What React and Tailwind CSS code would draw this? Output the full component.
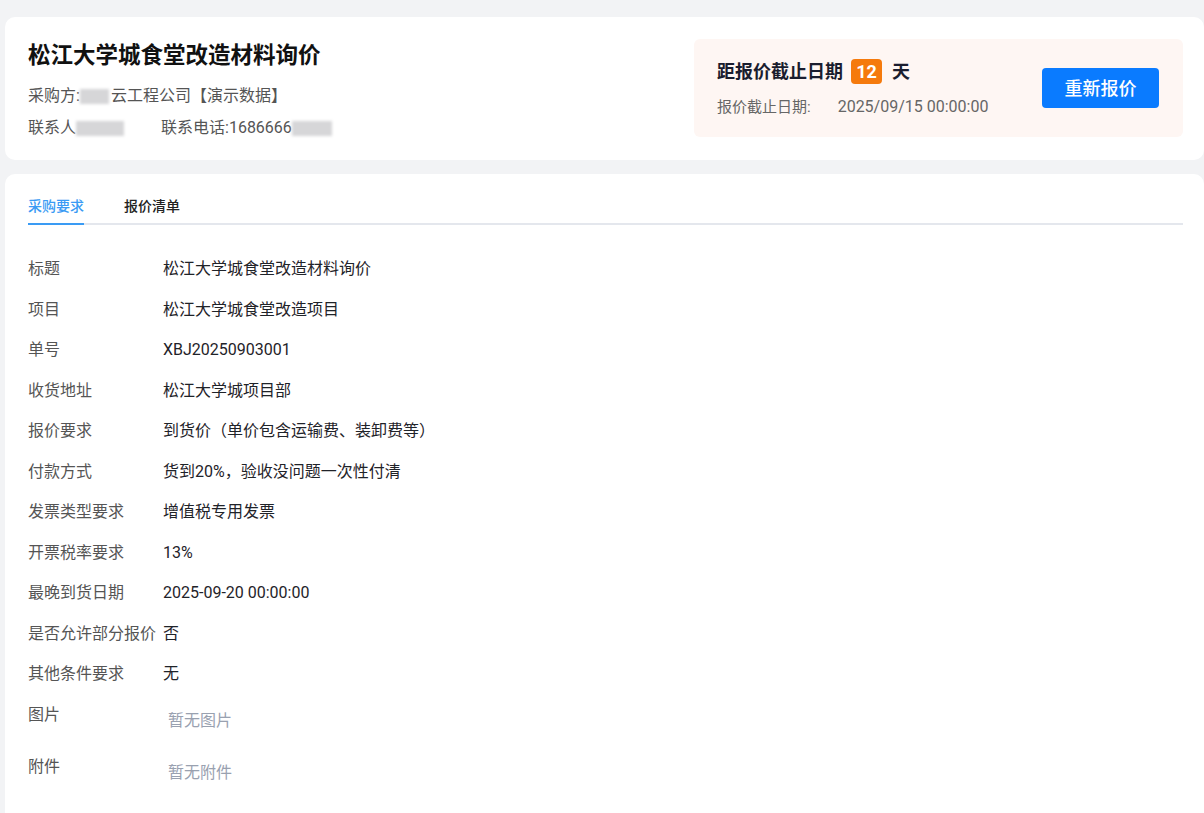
import React, { useState } from 'react';

const rows = [
  ['标题', '松江大学城食堂改造材料询价'],
  ['项目', '松江大学城食堂改造项目'],
  ['单号', 'XBJ20250903001'],
  ['收货地址', '松江大学城项目部'],
  ['报价要求', '到货价（单价包含运输费、装卸费等）'],
  ['付款方式', '货到20%，验收没问题一次性付清'],
  ['发票类型要求', '增值税专用发票'],
  ['开票税率要求', '13%'],
  ['最晚到货日期', '2025-09-20 00:00:00'],
  ['是否允许部分报价', '否'],
  ['其他条件要求', '无'],
];

// masked personal info
const Blur = ({ w }) => (
  <span
    className="inline-block h-[15px] bg-[#d6d6d8] blur-[1.5px] align-middle"
    style={{ width: w }}
  ></span>
);

const App = () => {
  const [tab, setTab] = useState(0);

  return (
    <div
      className="min-h-screen bg-[#f2f3f5] pl-[5px] pt-[17px]"
      style={{ fontFamily: 'Roboto, "Noto Sans CJK SC", sans-serif' }}
    >
      {/* Header card */}
      <div className="bg-white rounded-[10px] pl-[23px] pr-[21px] pt-[22px] pb-[21px] flex items-start justify-between">
        <div className="flex flex-col pt-[1px]">
          <h1 className="text-[22.5px] font-bold text-[#111] leading-[30px]">松江大学城食堂改造材料询价</h1>
          <p className="text-[16px] text-[#555] mt-[15px] leading-[22px] flex items-center">
            <span>采购方:</span>
            <Blur w={29} />
            <span className="ml-[2px]">云工程公司【演示数据】</span>
          </p>
          <p className="text-[16px] text-[#555] mt-[10px] leading-[22px] flex items-center">
            <span>联系人</span>
            <Blur w={48} />
            <span className="ml-[37px]">联系电话:1686666</span>
            <Blur w={40} />
          </p>
        </div>

        <div className="w-[489px] h-[98px] bg-[#fef6f3] rounded-[6px] pl-[23px] pr-[24px] flex items-center justify-between">
          <div>
            <div className="flex items-center text-[18px] leading-[26px] font-bold text-[#1a1d2e]">
              <span>距报价截止日期</span>
              <span className="ml-[8px] mr-[10px] bg-[#f57a0c] text-white rounded-[4px] w-[31px] h-[25px] flex items-center justify-center text-[18px]">12</span>
              <span>天</span>
            </div>
            <div className="mt-[11px] text-[15px] leading-[22px] text-[#666] flex">
              <span>报价截止日期:</span>
              <span className="ml-[27px] text-[16px]">2025/09/15 00:00:00</span>
            </div>
          </div>
          <button className="w-[117px] h-[40px] bg-[#0a7bff] text-white rounded-[4px] text-[18px] font-medium">
            重新报价
          </button>
        </div>
      </div>

      {/* Detail card */}
      <div className="mt-[14px] bg-white rounded-t-[10px] pl-[23px] pr-[21px] pt-[22px] pb-[24px] min-h-[650px]">
        <div className="flex border-b-2 border-[#e4e7ed] text-[14px] leading-[20px] font-medium">
          {['采购要求', '报价清单'].map((t, i) => (
            <button
              key={t}
              onClick={() => setTab(i)}
              className={`pb-[7px] mb-[-2px] border-b-2 ${i === 0 ? 'mr-[40px]' : ''} ${tab === i ? 'text-[#3a9bf4] border-[#3a9bf4]' : 'text-[#222] border-transparent'}`}
            >
              {t}
            </button>
          ))}
        </div>

        <div className="pt-[31px] text-[16px]">
          {rows.map(([k, v]) => (
            <div key={k} className="flex h-[40.5px] leading-[25px]">
              <span className="w-[135px] shrink-0 text-[#555]">{k}</span>
              <span className="text-[#1f2329]">{v}</span>
            </div>
          ))}
          <div className="flex h-[52px] leading-[25px]">
            <span className="w-[135px] shrink-0 text-[#555]">图片</span>
            <span className="ml-[5px] mt-[6px] text-[#99a1b0]">暂无图片</span>
          </div>
          <div className="flex h-[52px] leading-[25px]">
            <span className="w-[135px] shrink-0 text-[#555]">附件</span>
            <span className="ml-[5px] mt-[6px] text-[#99a1b0]">暂无附件</span>
          </div>
        </div>
      </div>
    </div>
  );
};

export default App;
